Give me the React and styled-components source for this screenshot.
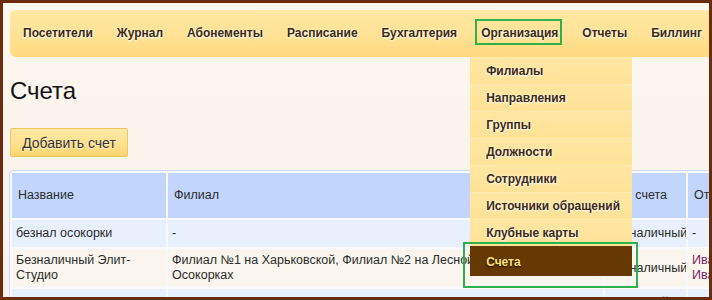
import React from "react";
import styled, { createGlobalStyle } from "styled-components";

const Global = createGlobalStyle`
  html, body { margin: 0; padding: 0; }
  body { font-family: "Liberation Sans", Arial, sans-serif; background: #faf5ec; }
`;

const Frame = styled.div`
  width: 712px;
  height: 300px;
  box-sizing: border-box;
  border: 3px solid #6a2c0c;
  overflow: hidden;
  background: linear-gradient(180deg, #fbf6ee 0%, #f9f3ea 100%);
`;

const Content = styled.div`
  width: 780px;
  padding: 7px 0 0 7px;
`;

const Nav = styled.ul`
  display: flex;
  margin: 0;
  padding: 0 0 0 1px;
  list-style: none;
  height: 47px;
  border-radius: 6px 0 0 6px;
  background: linear-gradient(180deg, #ffe8a3 0%, #ffe294 55%, #ffd97e 100%);
`;

const NavItem = styled.li`
  position: relative;
  padding: 0 12px 1px;
  height: 47px;
  display: flex;
  align-items: center;
  font-size: 12px;
  font-weight: bold;
  color: #3d2b12;
  text-shadow: 0 1px 2px rgba(255, 255, 255, 0.95), 0 0 3px rgba(255, 255, 255, 0.8);
  white-space: nowrap;
  box-sizing: border-box;
`;

const Highlight = styled.span`
  position: absolute;
  left: ${(p) => p.$left}px;
  top: ${(p) => p.$top}px;
  width: ${(p) => p.$width}px;
  height: ${(p) => p.$height}px;
  border: 2px solid #2fb24c;
  box-sizing: border-box;
  pointer-events: none;
  z-index: 3;
`;

const Dropdown = styled.ul`
  position: absolute;
  left: 1px;
  top: 100%;
  width: 162px;
  margin: 0;
  padding: 0;
  list-style: none;
  z-index: 2;
  background: #ffe49b;
`;

const DropItem = styled.li`
  position: relative;
  height: ${(p) => (p.$active ? 30 : 27)}px;
  display: flex;
  align-items: center;
  padding-left: 16px;
  box-sizing: border-box;
  font-size: 12px;
  font-weight: bold;
  color: ${(p) => (p.$active ? "#ffe07c" : "#3d2b12")};
  background: ${(p) =>
    p.$active ? "#663902" : "linear-gradient(180deg, #ffe6a2 0%, #ffe296 100%)"};
  border-top: 1px solid ${(p) => (p.$active ? "#663902" : "#ffeab2")};
  text-shadow: ${(p) =>
    p.$active
      ? "0 1px 2px rgba(0,0,0,0.9)"
      : "0 1px 2px rgba(255,255,255,0.95), 0 0 3px rgba(255,255,255,0.8)"};
`;

const Title = styled.h1`
  margin: 20px 0 0 0;
  font-size: 24px;
  line-height: 28px;
  font-weight: normal;
  color: #141414;
`;

const Button = styled.button`
  margin: 23px 0 0 0;
  height: 29px;
  width: 118px;
  padding: 0;
  border: 1px solid #f0c660;
  border-radius: 2px;
  background: linear-gradient(180deg, #ffe9a6 0%, #ffdf8a 60%, #ffd470 100%);
  font-family: "Liberation Sans", Arial, sans-serif;
  font-size: 14px;
  color: #333;
  text-shadow: 0 1px 0 rgba(255, 255, 255, 0.7);
  display: block;
`;

const Table = styled.table`
  margin: 14px 0 0 0;
  border-collapse: separate;
  border-spacing: 2px;
  table-layout: fixed;
  width: 830px;
  background: #f7f9ff;
  border-radius: 4px;
  box-shadow: 0 0 0 1px #cddbf6;
  font-size: 12.5px;
  line-height: 15px;
  color: #2c2c2c;
`;

const Th = styled.th`
  width: ${(p) => p.$w}px;
  height: 45px;
  padding: 0 6px;
  box-sizing: border-box;
  text-align: left;
  font-weight: normal;
  background: #c2d6fd;
  white-space: nowrap;
  overflow: hidden;
`;

const Row = styled.tr`
  height: 27px;
  background: ${(p) => (p.$alt ? "#faf6ef" : "#e8f0fe")};
`;

const Td = styled.td`
  padding: 4px 5px 4px 4px;
  vertical-align: middle;
  overflow: hidden;
  color: ${(p) => (p.$link ? "#7a1d68" : "inherit")};
`;

const navItems = [
  "Посетители",
  "Журнал",
  "Абонементы",
  "Расписание",
  "Бухгалтерия",
  "Организация",
  "Отчеты",
  "Биллинг",
];

const subItems = [
  "Филиалы",
  "Направления",
  "Группы",
  "Должности",
  "Сотрудники",
  "Источники обращений",
  "Клубные карты",
  "Счета",
];

export default function App() {
  return (
    <>
      <Global />
      <Frame>
        <Content>
          <Nav>
            {navItems.map((n) => (
              <NavItem key={n}>
                {n}
                {n === "Организация" && (
                  <>
                    <Highlight $left={6} $top={9} $width={87} $height={26} />
                    <Dropdown>
                      {subItems.map((s) => (
                        <DropItem key={s} $active={s === "Счета"}>
                          {s}
                          {s === "Счета" && (
                            <Highlight $left={-7} $top={-5} $width={175} $height={46} />
                          )}
                        </DropItem>
                      ))}
                    </Dropdown>
                  </>
                )}
              </NavItem>
            ))}
          </Nav>
          <Title>Счета</Title>
          <Button>Добавить счет</Button>
          <Table>
            <thead>
              <tr>
                <Th $w={154}>Название</Th>
                <Th $w={435}>Филиал</Th>
                <Th $w={81}>Тип счета</Th>
                <Th $w={150}>Ответственный</Th>
              </tr>
            </thead>
            <tbody>
              <Row>
                <Td>безнал осокорки</Td>
                <Td>-</Td>
                <Td>Безналичный</Td>
                <Td>-</Td>
              </Row>
              <Row $alt>
                <Td>Безналичный Элит-Студио</Td>
                <Td>Филиал №1 на Харьковской, Филиал №2 на Лесной, Филиал №3 на Осокорках</Td>
                <Td>Безналичный</Td>
                <Td $link>
                  Иванов И.
                  <br />
                  Иванова А.
                </Td>
              </Row>
              <Row>
                <Td>Рахунок організації</Td>
                <Td></Td>
                <Td>Наличный</Td>
                <Td>-</Td>
              </Row>
            </tbody>
          </Table>
        </Content>
      </Frame>
    </>
  );
}
